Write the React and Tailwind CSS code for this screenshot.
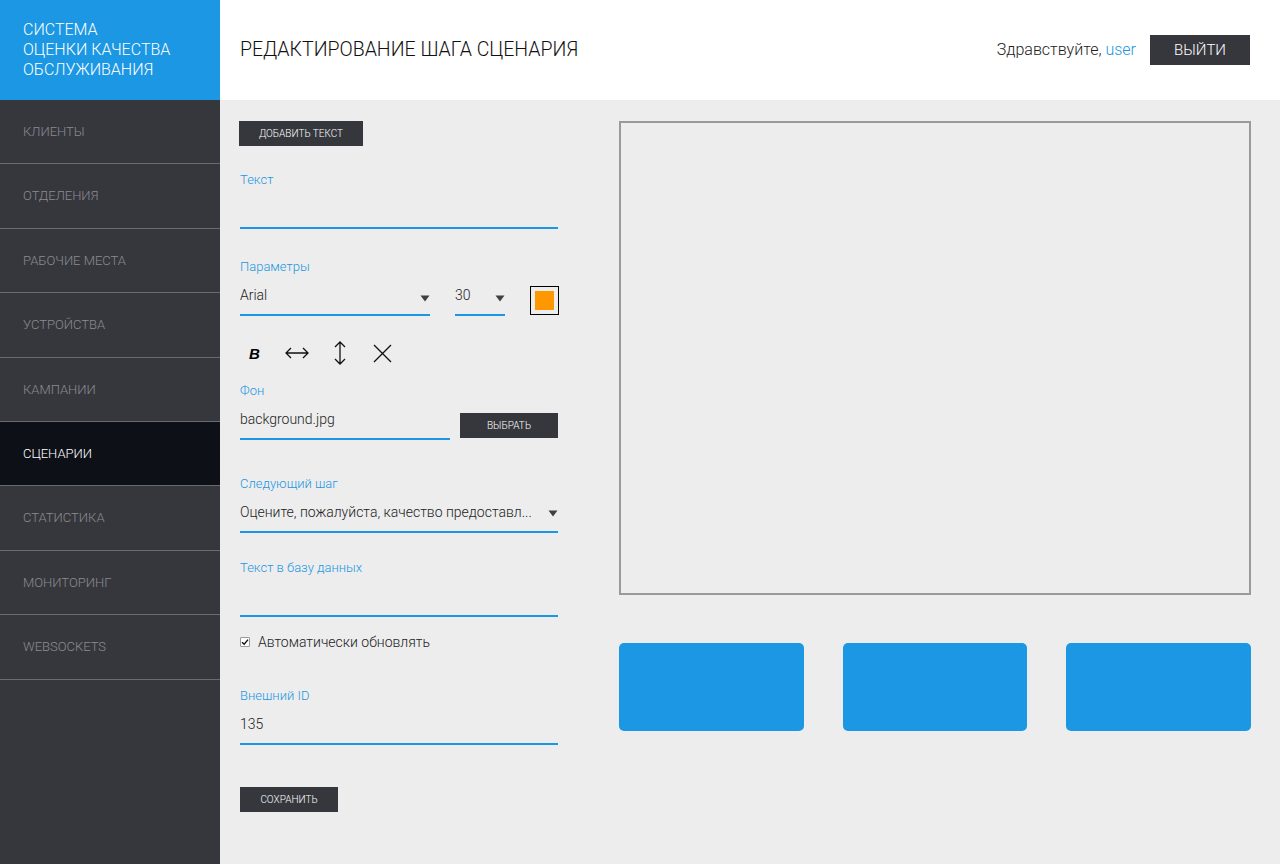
import React from "react";

const nav = [
  "КЛИЕНТЫ",
  "ОТДЕЛЕНИЯ",
  "РАБОЧИЕ МЕСТА",
  "УСТРОЙСТВА",
  "КАМПАНИИ",
  "СЦЕНАРИИ",
  "СТАТИСТИКА",
  "МОНИТОРИНГ",
  "WEBSOCKETS",
];

function Tri() {
  return (
    <svg width="10" height="7" viewBox="0 0 10 7" className="shrink-0">
      <path d="M0.5 0.5 L9.5 0.5 L5 6.5 Z" fill="#3f4046" />
    </svg>
  );
}

function Label({ children, className = "" }) {
  return (
    <div className={"h-4 pt-px text-[13px] leading-4 font-light text-[#1b97e3] " + className}>
      {children}
    </div>
  );
}

export default function App() {
  return (
    <div
      className="flex w-[1280px] h-[864px] bg-[#ededed] overflow-hidden"
      style={{ fontFamily: "Roboto, 'Noto Sans', sans-serif" }}
    >
      {/* Sidebar */}
      <aside className="w-[220px] shrink-0 flex flex-col bg-[#36373d]">
        <div className="h-[100px] bg-[#1b97e3] px-[23px] pt-[20px] text-[16px] leading-[20px] font-light text-white">
          <div>СИСТЕМА</div>
          <div>ОЦЕНКИ КАЧЕСТВА</div>
          <div>ОБСЛУЖИВАНИЯ</div>
        </div>
        <nav className="flex flex-col">
          {nav.map((n) => {
            const active = n === "СЦЕНАРИИ";
            return (
              <div
                key={n}
                className={
                  "h-[64.4px] flex items-center px-[23px] border-b border-[#6a6b70] text-[13px] font-light " +
                  (active ? "bg-[#0d1017] text-white" : "text-[#8a8b90]")
                }
              >
                {n}
              </div>
            );
          })}
        </nav>
      </aside>

      <div className="flex-1 flex flex-col">
        {/* Header */}
        <header className="h-[100px] shrink-0 bg-white flex items-center pl-[20px] pr-[30px]">
          <h1 className="text-[19.5px] font-light text-[#111]">
            РЕДАКТИРОВАНИЕ ШАГА СЦЕНАРИЯ
          </h1>
          <div className="ml-auto flex items-center">
            <span className="text-[16px] font-light text-[#222]">
              Здравствуйте, <span className="text-[#1b97e3]">user</span>
            </span>
            <button className="ml-[14px] w-[100px] h-[30px] bg-[#36373d] text-white text-[15px] font-light">
              ВЫЙТИ
            </button>
          </div>
        </header>

        {/* Main */}
        <main className="flex-1 flex pl-[20px] pr-[29px] pt-[21px]">
          {/* Form */}
          <div className="w-[318px] shrink-0 flex flex-col text-[14px] text-[#222]">
            <button className="-ml-px w-[124px] h-[25px] bg-[#36373d] text-white text-[10px] font-light">
              ДОБАВИТЬ ТЕКСТ
            </button>

            <Label className="mt-[25px]">Текст</Label>
            <div className="h-[42px] border-b-2 border-[#1b97e3]" />

            <Label className="mt-[29px]">Параметры</Label>
            <div className="flex items-end h-[42px]">
              <div className="w-[190px] h-[42px] pt-[2px] flex items-center justify-between border-b-2 border-[#1b97e3]">
                <span className="font-light">Arial</span>
                <span className="mt-[6px]"><Tri /></span>
              </div>
              <div className="ml-[25px] w-[50px] h-[42px] pt-[2px] flex items-center justify-between border-b-2 border-[#1b97e3]">
                <span className="font-light">30</span>
                <span className="mt-[6px]"><Tri /></span>
              </div>
              <div className="ml-auto mb-[1px] -mr-px w-[29px] h-[29px] border border-black flex items-center justify-center">
                <div className="w-[19px] h-[19px] bg-[#ff9800]" />
              </div>
            </div>

            <div className="h-[24px] mt-[25px] flex items-center">
              <span className="ml-[9px] w-[10px] text-[15px] font-bold italic text-black leading-none" style={{ fontFamily: "'Liberation Sans', Arial, sans-serif" }}>
                B
              </span>
              <svg className="ml-[26px]" width="24" height="14" viewBox="0 0 24 14">
                <path d="M1 7 H23 M6 2 L1 7 L6 12 M18 2 L23 7 L18 12" stroke="#111" strokeWidth="1.3" fill="none" />
              </svg>
              <svg className="ml-[25px]" width="12" height="24" viewBox="0 0 12 24">
                <path d="M6 1 V23 M1 6 L6 1 L11 6 M1 18 L6 23 L11 18" stroke="#111" strokeWidth="1.3" fill="none" />
              </svg>
              <svg className="ml-[27px]" width="19" height="19" viewBox="0 0 19 19">
                <path d="M1 1 L18 18 M18 1 L1 18" stroke="#111" strokeWidth="1.3" fill="none" />
              </svg>
            </div>

            <Label className="mt-[17px]">Фон</Label>
            <div className="flex items-end h-[42px]">
              <div className="w-[210px] h-[42px] pt-[2px] flex items-center border-b-2 border-[#1b97e3]">
                <span className="font-light">background.jpg</span>
              </div>
              <button className="ml-auto mb-[2px] w-[98px] h-[25px] bg-[#36373d] text-white text-[10px] font-light">
                ВЫБРАТЬ
              </button>
            </div>

            <Label className="mt-[35px]">Следующий шаг</Label>
            <div className="h-[42px] pt-[2px] flex items-center justify-between border-b-2 border-[#1b97e3]">
              <span className="font-light whitespace-nowrap">Оцените, пожалуйста, качество предоставл...</span>
              <span className="mt-[2px]"><Tri /></span>
            </div>

            <Label className="mt-[26px]">Текст в базу данных</Label>
            <div className="h-[42px] border-b-2 border-[#1b97e3]" />

            <div className="mt-[17px] h-[16px] flex items-center">
              <div className="w-[10px] h-[10px] bg-white border border-[#9a9a9a] rounded-[1px] flex items-center justify-center">
                <svg width="8" height="8" viewBox="0 0 8 8">
                  <path d="M1 4.2 L3.2 6.3 L7 1.6" stroke="#111" strokeWidth="1.4" fill="none" />
                </svg>
              </div>
              <span className="ml-[8px] font-light">Автоматически обновлять</span>
            </div>

            <Label className="mt-[37px]">Внешний ID</Label>
            <div className="h-[42px] pt-[2px] flex items-center border-b-2 border-[#1b97e3]">
              <span className="font-light">135</span>
            </div>

            <button className="mt-[42px] w-[98px] h-[25px] bg-[#36373d] text-white text-[10px] font-light">
              СОХРАНИТЬ
            </button>
          </div>

          {/* Preview */}
          <div className="ml-[61px] flex-1 flex flex-col">
            <div className="h-[474px] border-2 border-[#9a9a9a]" />
            <div className="mt-[48px] grid grid-cols-3 gap-[39px]">
              <div className="h-[88px] rounded-[5px] bg-[#1b97e3]" />
              <div className="h-[88px] rounded-[5px] bg-[#1b97e3]" />
              <div className="h-[88px] rounded-[5px] bg-[#1b97e3]" />
            </div>
          </div>
        </main>
      </div>
    </div>
  );
}
